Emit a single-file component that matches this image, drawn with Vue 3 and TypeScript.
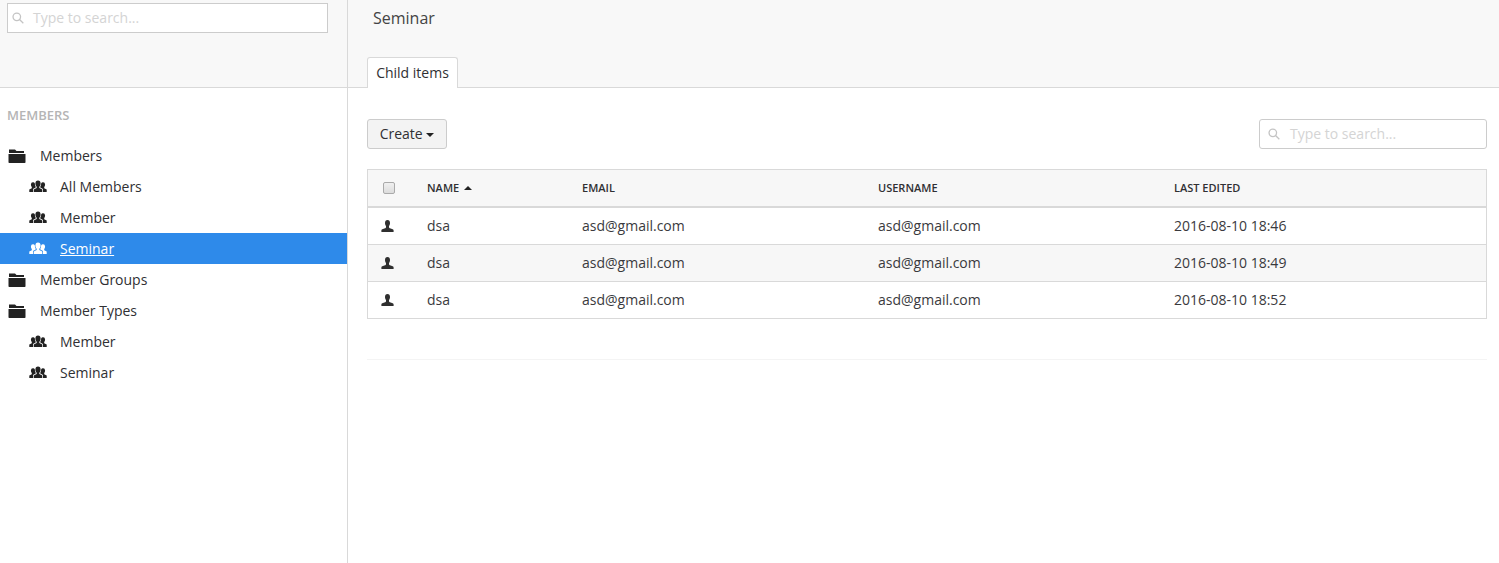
<script setup lang="ts">
interface TreeItem { label: string; kind: 'folder' | 'group'; active?: boolean }
const tree: TreeItem[] = [
  { label: 'Members', kind: 'folder' },
  { label: 'All Members', kind: 'group' },
  { label: 'Member', kind: 'group' },
  { label: 'Seminar', kind: 'group', active: true },
  { label: 'Member Groups', kind: 'folder' },
  { label: 'Member Types', kind: 'folder' },
  { label: 'Member', kind: 'group' },
  { label: 'Seminar', kind: 'group' },
]
const rows = [
  { name: 'dsa', email: 'asd@gmail.com', username: 'asd@gmail.com', edited: '2016-08-10 18:46' },
  { name: 'dsa', email: 'asd@gmail.com', username: 'asd@gmail.com', edited: '2016-08-10 18:49' },
  { name: 'dsa', email: 'asd@gmail.com', username: 'asd@gmail.com', edited: '2016-08-10 18:52' },
]
</script>

<template>
  <div class="page">
    <aside class="sidebar">
      <div class="side-head">
        <div class="search square">
          <svg class="mag" viewBox="0 0 14 14"><circle cx="5.600" cy="5.600" r="4.400" /><path d="M8.800 8.800l4.400 4.400" /></svg>
          <span class="ph">Type to search...</span>
        </div>
      </div>
      <div class="section">MEMBERS</div>
      <ul class="tree">
        <li v-for="(item, i) in tree" :key="i" class="node" :class="[item.kind, { active: item.active }]">
          <svg v-if="item.kind === 'folder'" class="ico-folder" viewBox="0 0 18 14">
            <path d="M1 .5h6L8.500 2H16v2H1z" />
            <path d="M.5 5h17v8.200a.8.8 0 0 1-.8.8H1.300a.8.8 0 0 1-.8-.8z" />
          </svg>
          <svg v-else class="ico-group" viewBox="0 0 18 13">
            <path d="M9 0.500a2.600 3.200 0 0 1 2.600 3.200c0 1.300-.7 2.500-1.300 3v1.200l3 1.600V12H4.700V9.500l3-1.600V6.700c-.6-.5-1.300-1.700-1.300-3A2.600 3.200 0 0 1 9 .5z" />
            <path d="M4 2.300a2 2.400 0 0 1 1.800 1c0 1.300.3 2.600.9 3.500v.8L4 9.100V12H.3V9.600l2.500-1.400V7.100C2.300 6.500 1.900 5.500 1.900 4.500A2 2.400 0 0 1 4 2.300z" />
            <path d="M14 2.300a2 2.400 0 0 0-1.800 1c0 1.300-.3 2.600-.9 3.500v.8L14 9.100V12h3.700V9.600l-2.500-1.400V7.100c.5-.6.9-1.600.9-2.600A2 2.400 0 0 0 14 2.300z" />
          </svg>
          <span class="label">{{ item.label }}</span>
        </li>
      </ul>
    </aside>

    <main class="main">
      <header class="main-head">
        <div class="title">Seminar</div>
        <div class="tabs"><div class="tab">Child items</div></div>
      </header>
      <div class="content">
        <div class="toolbar">
          <div class="btn">Create <i class="caret" /></div>
          <div class="search rounded">
            <svg class="mag" viewBox="0 0 14 14"><circle cx="5.600" cy="5.600" r="4.400" /><path d="M8.800 8.800l4.400 4.400" /></svg>
            <span class="ph">Type to search...</span>
          </div>
        </div>
        <table class="grid">
          <colgroup>
            <col class="c0" /><col class="c1" /><col class="c2" /><col class="c2" /><col />
          </colgroup>
          <thead>
            <tr>
              <th class="check"><span class="box" /></th>
              <th>NAME <i class="sort" /></th>
              <th>EMAIL</th>
              <th>USERNAME</th>
              <th>LAST EDITED</th>
            </tr>
          </thead>
          <tbody>
            <tr v-for="(r, i) in rows" :key="i">
              <td class="usr">
                <svg viewBox="0 0 13 12"><path d="M6.500 0C8.200 0 9 1.300 9 2.900c0 1.200-.5 2.300-1 3v1.300c0 .7 1 1.200 3 1.700 1 .3 1.600.7 1.600 1.500V12H.4v-1.600c0-.8.600-1.200 1.600-1.500 2-.5 3-1 3-1.700V5.900c-.5-.7-1-1.800-1-3C4 1.300 4.800 0 6.500 0z" /></svg>
              </td>
              <td>{{ r.name }}</td>
              <td>{{ r.email }}</td>
              <td>{{ r.username }}</td>
              <td>{{ r.edited }}</td>
            </tr>
          </tbody>
        </table>
        <div class="rule" />
      </div>
    </main>
  </div>
</template>

<style>
html, body { margin: 0; background: #fff; }
</style>

<style scoped>
.page {
  display: flex;
  height: 563px;
  overflow: hidden;
  font-family: "Open Sans", sans-serif;
  font-size: 14px;
  color: #303033;
}
.sidebar {
  width: 347px;
  flex: none;
  border-right: 1px solid #d9d9d9;
}
.side-head {
  box-sizing: border-box;
  height: 88px;
  background: #f8f8f8;
  border-bottom: 1px solid #d9d9d9;
  padding: 3px 0 0 7px;
}
.search {
  display: flex;
  align-items: center;
  box-sizing: border-box;
  height: 30px;
  background: #fff;
  border: 1px solid #ccc;
  color: #d4d4d4;
  font-size: 14px;
}
.ph { padding-bottom: 2px; }
.search.square { width: 321px; border-radius: 0; }
.search.rounded { width: 228px; border-radius: 3px; }
.mag {
  width: 12px;
  height: 12px;
  fill: none;
  stroke: #c4c4c4;
  stroke-width: 1.5;
}
.search.square .mag { margin: 0 9px 0 4px; }
.search.rounded .mag { margin: 0 10px 0 8px; }
.section {
  margin: 18px 0 0 7px;
  height: 19px;
  line-height: 19px;
  font-size: 13px;
  font-weight: 600;
  color: #b5b5b5;
}
.tree { list-style: none; margin: 15px 0 0; padding: 0; }
.node {
  display: flex;
  align-items: center;
  height: 31px;
  color: #303033;
}
.node.folder { padding-left: 8px; }
.node.group { padding-left: 29px; }
.ico-folder { width: 18px; height: 14px; fill: #222; margin-right: 14px; }
.ico-group { width: 18px; height: 13px; fill: #222; margin-right: 13px; }
.node.active { background: #2e8aea; color: #fff; }
.node.active .ico-group { fill: #fff; }
.node.active .label { text-decoration: underline; }
.main { flex: 1; min-width: 0; }
.main-head {
  box-sizing: border-box;
  height: 88px;
  background: #f8f8f8;
  border-bottom: 1px solid #d9d9d9;
  display: flex;
  flex-direction: column;
}
.title {
  margin: 7px 0 0 25px;
  font-size: 16px;
  line-height: 22px;
  color: #444;
}
.tabs { margin-top: auto; margin-bottom: -1px; padding-left: 19px; height: 31px; }
.tab {
  box-sizing: border-box;
  width: 91px;
  height: 31px;
  border: 1px solid #d9d9d9;
  border-bottom: none;
  border-radius: 3px 3px 0 0;
  background: #fff;
  text-align: center;
  line-height: 30px;
  font-size: 14px;
  color: #303033;
}
.content { padding: 31px 12px 0 19px; }
.toolbar {
  display: flex;
  justify-content: space-between;
  height: 30px;
  align-items: center;
}
.btn {
  box-sizing: border-box;
  width: 80px;
  height: 30px;
  line-height: 28px;
  text-align: center;
  background: #f3f3f3;
  border: 1px solid #ccc;
  border-radius: 3px;
  font-size: 14px;
  color: #303033;
}
.caret {
  display: inline-block;
  vertical-align: 2px;
  border-top: 4px solid #222;
  border-left: 4px solid transparent;
  border-right: 4px solid transparent;
}
.grid {
  margin-top: 20px;
  width: 1120px;
  border-collapse: collapse;
  table-layout: fixed;
  border: 1px solid #d9d9d9;
}
.c0 { width: 59.5px; }
.c1 { width: 155px; }
.c2 { width: 296px; }
th {
  height: 35px;
  padding: 0 0 1px;
  text-align: left;
  background: #f7f7f7;
  border-bottom: 2px solid #d9d9d9;
  font-size: 11px;
  font-weight: 600;
  color: #303033;
}
td {
  height: 34px;
  padding: 0 0 2px;
  border-bottom: 1px solid #d9d9d9;
  font-size: 14px;
  color: #3a3a3d;
}
tbody tr:nth-child(even) td { background: #f7f7f7; }
th.check { padding-left: 15px; }
.box {
  display: block;
  box-sizing: border-box;
  width: 12px;
  height: 12px;
  border: 1px solid #aaa;
  border-radius: 2px;
  background: linear-gradient(#f0f0f0, #dcdcdc);
}
.sort {
  display: inline-block;
  vertical-align: 2px;
  margin-left: 2px;
  border-bottom: 4px solid #222;
  border-left: 4px solid transparent;
  border-right: 4px solid transparent;
}
.usr svg {
  display: block;
  width: 13px;
  height: 12px;
  margin: 2px 0 0 13px;
  fill: #2f2f2f;
}
.rule {
  margin-top: 40px;
  width: 1120px;
  border-top: 1px solid #f4f4f4;
}
</style>
